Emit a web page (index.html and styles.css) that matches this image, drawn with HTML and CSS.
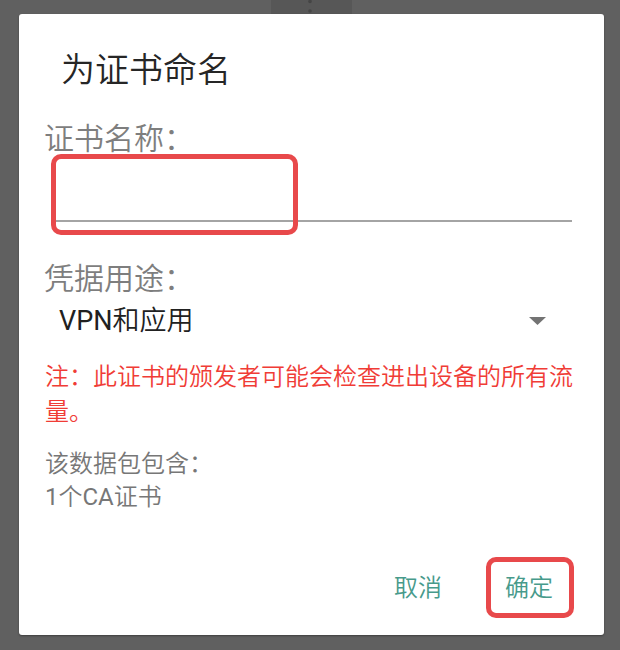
FILE: index.html
```html
<!DOCTYPE html>
<html lang="zh-CN">
<head>
<meta charset="utf-8">
<title>为证书命名</title>
<link rel="stylesheet" href="styles.css">
</head>
<body>
<div class="screen">
  <div class="topbar">
    <div class="menu-hint">
      <svg class="dots" width="4" height="14" viewBox="0 0 4 14"><circle cx="2" cy="1.5" r="1.8"/><circle cx="2" cy="11" r="1.8"/></svg>
    </div>
  </div>
  <div class="dialog">
    <h1 class="title">为证书命名</h1>
    <div class="label">证书名称：</div>
    <div class="field">
      <input class="name-input" type="text" aria-label="证书名称">
      <span class="mark mark-field"></span>
    </div>
    <div class="label label-usage">凭据用途：</div>
    <div class="spinner">
      <span class="spinner-text"><span class="latin">VPN</span>和应用</span>
      <svg class="caret" width="17" height="8" viewBox="0 0 17 8"><polygon points="0,0 17,0 8.5,8"/></svg>
    </div>
    <p class="note">注：此证书的颁发者可能会检查进出设备的所有流量。</p>
    <p class="info">该数据包包含：<br><span class="latin">1</span>个<span class="latin">CA</span>证书</p>
    <div class="actions">
      <button class="btn">取消</button>
      <button class="btn btn-ok">确定<span class="mark mark-ok"></span></button>
    </div>
  </div>
</div>
</body>
</html>
```
FILE: styles.css
```css
html, body {
  margin: 0;
  padding: 0;
}
body {
  background: #606060;
  width: 620px;
  height: 650px;
  overflow: hidden;
  font-family: Roboto, "Noto Sans CJK SC", sans-serif;
  font-weight: 350;
}
.latin {
  font-weight: 400;
}
.screen {
  display: flex;
  flex-direction: column;
  padding: 0 16px 15px 19px;
}
.topbar {
  height: 14px;
  display: flex;
}
.menu-hint {
  margin-left: 252px;
  width: 81px;
  height: 14px;
  background: #575757;
  display: flex;
  justify-content: center;
}
.dots {
  fill: #454545;
  margin-left: -3px;
}
.dialog {
  width: 585px;
  height: 621px;
  box-sizing: border-box;
  background: #ffffff;
  border-radius: 3px;
  box-shadow: 0 1px 2px rgba(0, 0, 0, 0.35);
  display: flex;
  flex-direction: column;
  padding-top: 36px;
}
.title {
  margin: 0 0 0 42px;
  font-size: 34px;
  line-height: 40px;
  font-weight: 350;
  color: #262626;
}
.label {
  margin: 31px 0 0 25px;
  font-size: 30px;
  line-height: 36px;
  color: #7e7e7e;
}
.field {
  position: relative;
  margin: 0 32px 0 37px;
  height: 63px;
  border-bottom: 2px solid #a4a4a4;
}
.name-input {
  width: 100%;
  height: 100%;
  border: none;
  outline: none;
  background: transparent;
  padding: 0;
  font-family: inherit;
  font-size: 27px;
}
.mark {
  position: absolute;
  box-sizing: border-box;
  border: 5px solid #e8494b;
  border-radius: 10px;
  pointer-events: none;
}
.mark-field {
  left: -5px;
  top: -3px;
  width: 247px;
  height: 81px;
}
.label-usage {
  margin-top: 39px;
}
.spinner {
  margin: 6px 58px 0 40px;
  height: 36px;
  display: flex;
  align-items: center;
  justify-content: space-between;
}
.spinner-text {
  font-size: 27px;
  line-height: 36px;
  color: #212121;
}
.caret {
  fill: #737373;
}
.note {
  margin: 21px 19px 0 26px;
  font-size: 24px;
  line-height: 35px;
  color: #f03c36;
}
.info {
  margin: 18px 19px 0 26px;
  font-size: 24px;
  line-height: 33px;
  color: #777777;
}
.actions {
  margin: 47px 35px 0 0;
  display: flex;
  justify-content: flex-end;
  gap: 31px;
}
.btn {
  position: relative;
  border: none;
  background: transparent;
  padding: 0 16px;
  height: 54px;
  font-family: inherit;
  font-weight: 350;
  font-size: 24px;
  line-height: 54px;
  color: #479a8b;
}
.mark-ok {
  left: -3px;
  right: -5px;
  top: -4px;
  bottom: -3px;
}
```
